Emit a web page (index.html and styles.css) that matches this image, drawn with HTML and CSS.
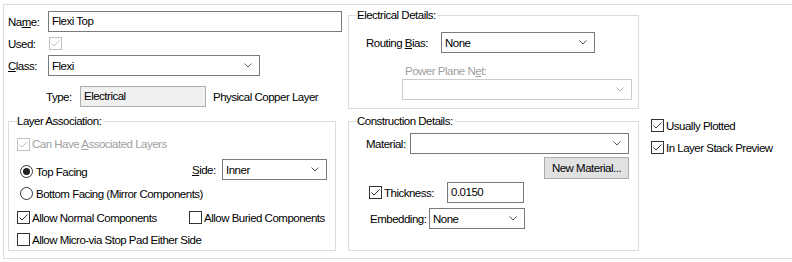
FILE: index.html
```html
<!DOCTYPE html>
<html lang="en">
<head>
  <meta charset="UTF-8">
  <title>Layer Properties</title>
  <link rel="stylesheet" href="styles.css">
</head>
<body>
  <div class="frame">

    <div class="col-left">
      <div class="row row-name">
        <span class="lbl lbl-name">Na<u>m</u>e:</span>
        <div class="field field-name">Flexi Top</div>
      </div>
      <div class="row row-used">
        <span class="lbl lbl-name">Used:</span>
        <span class="cb cb-off checked"><svg viewBox="0 0 11 11"><polyline points="1.5,5.5 4,8 9.5,2.5"/></svg></span>
      </div>
      <div class="row row-class">
        <span class="lbl lbl-name"><u>C</u>lass:</span>
        <div class="select select-class"><span>Flexi</span><svg class="chev" viewBox="0 0 8 5"><polyline points="0.5,0.5 4,4 7.5,0.5"/></svg></div>
      </div>
      <div class="row row-type">
        <span class="lbl lbl-type">Type:</span>
        <div class="field field-ro">Electrical</div>
        <span class="note">Physical Copper Layer</span>
      </div>

      <fieldset class="group group-layer">
        <legend>Layer Association:</legend>
        <div class="row row-assoc">
          <span class="cb cb-off checked"><svg viewBox="0 0 11 11"><polyline points="1.5,5.5 4,8 9.5,2.5"/></svg></span>
          <span class="txt-off">Can Have <u>A</u>ssociated Layers</span>
        </div>
        <div class="row row-top">
          <span class="radio on"></span>
          <span class="radio-text">Top Facing</span>
          <span class="lbl lbl-side"><u>S</u>ide:</span>
          <div class="select select-side"><span>Inner</span><svg class="chev" viewBox="0 0 8 5"><polyline points="0.5,0.5 4,4 7.5,0.5"/></svg></div>
        </div>
        <div class="row row-bottom">
          <span class="radio"></span>
          <span class="radio-text">Bottom Facing (Mirror Components)</span>
        </div>
        <div class="row row-allow">
          <span class="cb checked"><svg viewBox="0 0 11 11"><polyline points="1.5,5.5 4,8 9.5,2.5"/></svg></span>
          <span class="cb-text allow-normal">Allow Normal Components</span>
          <span class="cb"></span>
          <span class="cb-text">Allow Buried Components</span>
        </div>
        <div class="row row-micro">
          <span class="cb"></span>
          <span class="cb-text">Allow Micro-via Stop Pad Either Side</span>
        </div>
      </fieldset>
    </div>

    <div class="col-mid">
      <fieldset class="group group-elec">
        <legend>Electrical Details:</legend>
        <div class="row row-bias">
          <span class="lbl lbl-bias">Routing <u>B</u>ias:</span>
          <div class="select select-bias"><span>None</span><svg class="chev" viewBox="0 0 8 5"><polyline points="0.5,0.5 4,4 7.5,0.5"/></svg></div>
        </div>
        <div class="row row-plane-lbl">
          <span class="txt-off">Power Plane N<u>e</u>t:</span>
        </div>
        <div class="row row-plane">
          <div class="select select-off select-plane"><span></span><svg class="chev" viewBox="0 0 8 5"><polyline points="0.5,0.5 4,4 7.5,0.5"/></svg></div>
        </div>
      </fieldset>

      <fieldset class="group group-cons">
        <legend>Construction Details:</legend>
        <div class="row row-material">
          <span class="lbl lbl-material">Material:</span>
          <div class="select select-material"><span></span><svg class="chev" viewBox="0 0 8 5"><polyline points="0.5,0.5 4,4 7.5,0.5"/></svg></div>
        </div>
        <div class="row row-button">
          <button class="btn" type="button">New Material...</button>
        </div>
        <div class="row row-thick">
          <span class="cb checked"><svg viewBox="0 0 11 11"><polyline points="1.5,5.5 4,8 9.5,2.5"/></svg></span>
          <span class="cb-text lbl-thick">Thickness:</span>
          <div class="field field-thick">0.0150</div>
        </div>
        <div class="row row-embed">
          <span class="lbl lbl-embed">Embedding:</span>
          <div class="select select-embed"><span>None</span><svg class="chev" viewBox="0 0 8 5"><polyline points="0.5,0.5 4,4 7.5,0.5"/></svg></div>
        </div>
      </fieldset>
    </div>

    <div class="col-right">
      <div class="row row-plotted">
        <span class="cb checked"><svg viewBox="0 0 11 11"><polyline points="1.5,5.5 4,8 9.5,2.5"/></svg></span>
        <span class="cb-text">Usually Plotted</span>
      </div>
      <div class="row row-preview">
        <span class="cb checked"><svg viewBox="0 0 11 11"><polyline points="1.5,5.5 4,8 9.5,2.5"/></svg></span>
        <span class="cb-text">In Layer Stack Preview</span>
      </div>
    </div>

  </div>
</body>
</html>
```

FILE: styles.css
```css
* {
  box-sizing: border-box;
}
body {
  margin: 0;
  background: #fff;
  overflow: hidden;
  font-family: "Liberation Sans", Arial, sans-serif;
  font-size: 11.5px;
  letter-spacing: -0.5px;
  white-space: nowrap;
  color: #000;
}
u {
  text-decoration: underline;
  text-underline-offset: 1px;
}

.frame {
  display: flex;
  align-items: flex-start;
  width: 800px;
  height: 255px;
  margin: 4px 0 0 3px;
  border: 1px solid #dcdcdc;
  border-right: none;
}

.row {
  display: flex;
  align-items: center;
}

/* columns */
.col-left {
  width: 334px;
  margin-left: 4px;
  padding-top: 6px;
}
.col-mid {
  width: 291px;
  margin-left: 6px;
  padding-top: 3px;
}
.col-right {
  margin-left: 12px;
  padding-top: 113px;
}

/* labels and text */
.lbl {
  flex: none;
}
.lbl-name {
  width: 40px;
}
.lbl-type {
  margin-left: 38px;
  width: 34px;
}
.note {
  margin-left: 7px;
}
.txt-off {
  color: #a0a0a0;
}

/* inputs */
.field {
  flex: none;
  height: 21px;
  border: 1px solid #7a7a7a;
  background: #fff;
  padding: 0 3px;
  line-height: 19px;
}
.field-name {
  width: 294px;
}
.field-ro {
  width: 126px;
  background: #f0f0f0;
  border-color: #adadad;
}
.field-thick {
  width: 77px;
  margin-left: 13px;
}

.select {
  flex: none;
  display: flex;
  align-items: center;
  justify-content: space-between;
  height: 21px;
  border: 1px solid #7a7a7a;
  background: #fff;
  padding: 0 7px 0 3px;
}
.select-off {
  border-color: #cccccc;
}
.select-off .chev {
  stroke: #b0b0b0;
}
.chev {
  width: 8px;
  height: 5px;
  fill: none;
  stroke: #555;
  stroke-width: 1;
}
.select-class {
  width: 212px;
}

/* checkboxes and radios */
.cb {
  display: inline-block;
  flex: none;
  width: 13px;
  height: 13px;
  border: 1px solid #333;
  background: #fff;
}
.cb svg {
  display: block;
  width: 11px;
  height: 11px;
  fill: none;
  stroke: #333;
  stroke-width: 1;
}
.cb-off {
  border-color: #c0c0c0;
}
.cb-off svg {
  stroke: #c0c0c0;
}
.cb-text {
  margin-left: 2px;
}
.radio {
  position: relative;
  display: inline-block;
  flex: none;
  width: 13px;
  height: 13px;
  border: 1px solid #333;
  border-radius: 50%;
  background: #fff;
  margin-left: 3px;
}
.radio.on::after {
  content: "";
  position: absolute;
  left: 2px;
  top: 2px;
  width: 7px;
  height: 7px;
  border-radius: 50%;
  background: #222;
}
.radio-text {
  margin-left: 3px;
}

/* top rows */
.row-name {
  height: 21px;
}
.row-used {
  height: 21px;
  margin-top: 1px;
}
.row-used .cb {
  margin-left: 1px;
}
.row-class {
  height: 21px;
  margin-top: 1px;
}
.row-type {
  height: 21px;
  margin-top: 10px;
}

/* group boxes */
.group {
  margin: 0;
  padding: 0 8px;
  border: 1px solid #dcdcdc;
  min-width: 0;
}
.group legend {
  padding: 0 2px 0 0;
  line-height: 14px;
}
.group-layer {
  width: 328px;
  height: 137px;
  margin-top: 7px;
}
.group-elec {
  width: 291px;
  height: 101px;
}
.group-cons {
  width: 291px;
  height: 137px;
  margin-top: 5px;
}

/* layer association */
.row-assoc {
  height: 16px;
  margin-top: 8px;
}
.row-assoc .txt-off {
  margin-left: 2px;
}
.row-top {
  height: 21px;
  margin-top: 7px;
}
.row-top .radio {
  margin-top: 4px;
}
.row-top .radio-text {
  margin-top: 4px;
  width: 157px;
}
.lbl-side {
  width: 30px;
}
.select-side {
  width: 105px;
}
.row-bottom {
  height: 15px;
  margin-top: 6px;
}
.row-allow {
  height: 15px;
  margin-top: 9px;
}
.allow-normal {
  width: 157px;
}
.row-micro {
  height: 15px;
  margin-top: 7px;
}

/* electrical details */
.row-bias {
  height: 21px;
  margin-top: 10px;
  padding-left: 9px;
}
.lbl-bias {
  width: 75px;
}
.select-bias {
  width: 154px;
}
.row-plane-lbl {
  height: 14px;
  margin-top: 11px;
  padding-left: 48px;
}
.row-plane {
  height: 21px;
  margin-top: 1px;
  padding-left: 45px;
}
.select-plane {
  width: 230px;
}

/* construction details */
.row-material {
  height: 21px;
  margin-top: 5px;
  padding-left: 9px;
}
.lbl-material {
  width: 44px;
}
.select-material {
  width: 219px;
}
.row-button {
  justify-content: flex-end;
  height: 22px;
  margin-top: 3px;
  padding-right: 1px;
}
.btn {
  height: 22px;
  width: 85px;
  padding: 0;
  border: 1px solid #adadad;
  background: #e1e1e1;
  font: inherit;
  letter-spacing: inherit;
  color: #000;
}
.row-thick {
  height: 21px;
  margin-top: 3px;
  padding-left: 12px;
}
.lbl-thick {
  width: 50px;
}
.row-embed {
  height: 21px;
  margin-top: 5px;
  padding-left: 13px;
}
.lbl-embed {
  width: 59px;
}
.select-embed {
  width: 96px;
}

/* right column */
.row-plotted {
  height: 15px;
}
.row-preview {
  height: 15px;
  margin-top: 7px;
}
.col-right .cb-text {
  margin-left: 2px;
}
```
